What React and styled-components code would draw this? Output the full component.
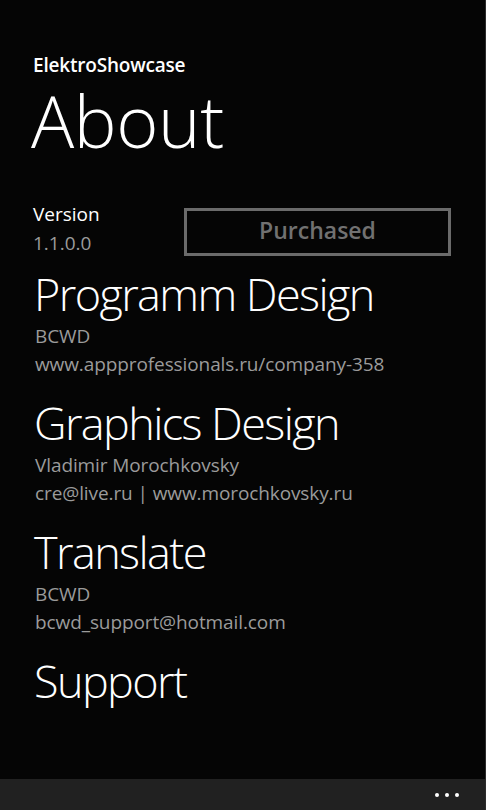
import React from 'react';
import styled, { createGlobalStyle } from 'styled-components';

const GlobalStyle = createGlobalStyle`
  html, body {
    margin: 0;
    padding: 0;
    background: #050505;
  }
  body {
    font-family: 'Open Sans', 'Noto Sans', sans-serif;
    -webkit-font-smoothing: antialiased;
  }
`;

const Screen = styled.div`
  width: 486px;
  height: 810px;
  box-sizing: border-box;
  display: flex;
  flex-direction: column;
  background: #050505;
  border-right: 1px solid #2c2c2c;
  overflow: hidden;
`;

const Content = styled.div`
  flex: 1;
  overflow: hidden;
  padding: 53px 0 0 33px;
  color: #fff;
`;

const AppName = styled.div`
  font-size: 19px;
  line-height: 24px;
  font-weight: 600;
  letter-spacing: -0.2px;
`;

const PageTitle = styled.h1`
  margin: 3px 0 0 -2px;
  font-size: 72px;
  line-height: 80px;
  font-weight: 300;
  letter-spacing: -0.4px;
`;

const VersionRow = styled.div`
  display: flex;
  align-items: flex-start;
  margin-top: 40px;
`;

const VersionBlock = styled.div`
  width: 151px;
  font-size: 19px;
  line-height: 29px;
`;

const Label = styled.div`
  color: ${(p) => (p.$muted ? '#9b9b9b' : '#fff')};
`;

const PurchasedButton = styled.button`
  margin-top: 8px;
  width: 267px;
  height: 48px;
  box-sizing: border-box;
  border: 3px solid #6b6b6b;
  background: transparent;
  color: #717171;
  font-family: inherit;
  font-size: 23px;
  font-weight: 600;
  padding: 0 0 4px;
`;

const Section = styled.section`
  margin-top: ${(p) => (p.$first ? '8px' : '17px')};
  padding-left: 2px;
`;

const Heading = styled.h2`
  margin: 0 0 0 -1px;
  font-size: 45px;
  line-height: 56px;
  font-weight: 300;
  letter-spacing: -1.6px;
`;

const Line = styled.div`
  font-size: 19px;
  line-height: 28px;
  color: #9b9b9b;
  letter-spacing: -0.1px;
`;

const AppBar = styled.div`
  height: 31px;
  flex-shrink: 0;
  background: #212121;
  display: flex;
  justify-content: flex-end;
  align-items: center;
  padding-right: 26px;
  gap: 6px;
`;

const Dot = styled.span`
  width: 4px;
  height: 4px;
  border-radius: 50%;
  background: #fff;
`;

const credits = [
  { title: 'Programm Design', lines: ['BCWD', 'www.appprofessionals.ru/company-358'] },
  { title: 'Graphics Design', lines: ['Vladimir Morochkovsky', 'cre@live.ru | www.morochkovsky.ru'] },
  { title: 'Translate', lines: ['BCWD', 'bcwd_support@hotmail.com'] },
  { title: 'Support', lines: [] },
];

export default function App() {
  return (
    <Screen>
      <GlobalStyle />
      <Content>
        <AppName>ElektroShowcase</AppName>
        <PageTitle>About</PageTitle>
        <VersionRow>
          <VersionBlock>
            <Label>Version</Label>
            <Label $muted>1.1.0.0</Label>
          </VersionBlock>
          <PurchasedButton disabled>Purchased</PurchasedButton>
        </VersionRow>
        {credits.map((c, i) => (
          <Section key={c.title} $first={i === 0}>
            <Heading>{c.title}</Heading>
            {c.lines.map((l) => (
              <Line key={l}>{l}</Line>
            ))}
          </Section>
        ))}
      </Content>
      <AppBar>
        <Dot />
        <Dot />
        <Dot />
      </AppBar>
    </Screen>
  );
}
